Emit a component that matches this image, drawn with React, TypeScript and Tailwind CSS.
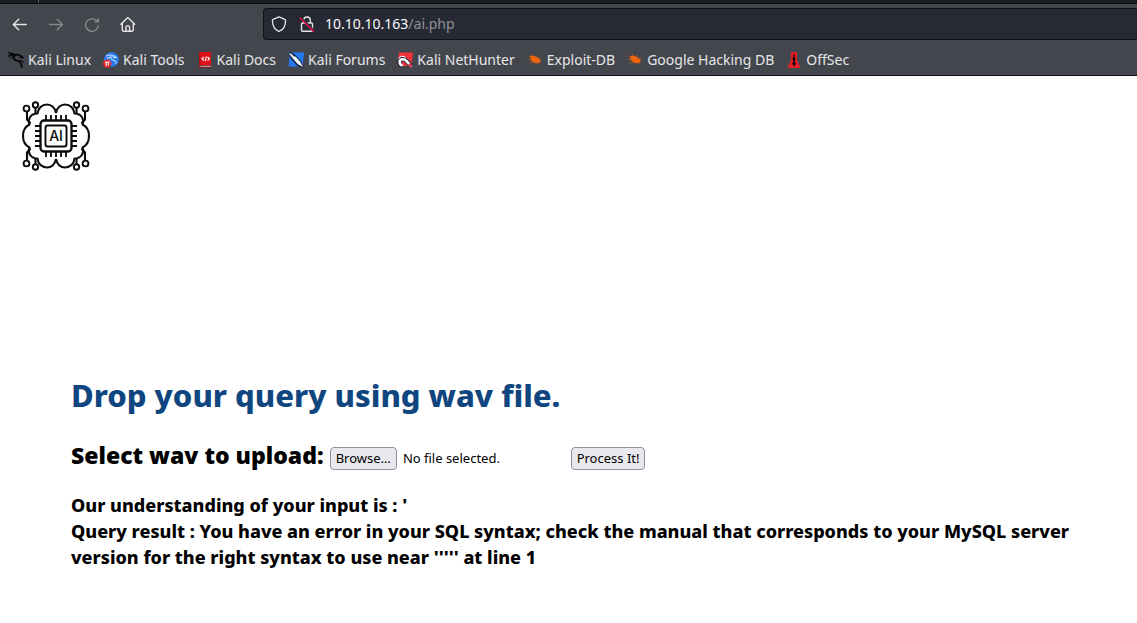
import React, { useRef, useState } from "react";

function BackIcon() {
  return (
    <svg className="size-4" viewBox="0 0 16 16" fill="none" stroke="currentColor" strokeWidth="1.4" strokeLinecap="round" strokeLinejoin="round">
      <path d="M14.3 8.5H1.4M6.7 3.2 1.3 8.5l5.4 5.3" />
    </svg>
  );
}

function ForwardIcon() {
  return (
    <svg className="size-4" viewBox="0 0 16 16" fill="none" stroke="currentColor" strokeWidth="1.4" strokeLinecap="round" strokeLinejoin="round">
      <path d="M1.5 8.5h12.9M9.2 3.2l5.4 5.3-5.4 5.3" />
    </svg>
  );
}

function ReloadIcon() {
  return (
    <svg className="size-4" viewBox="0 0 16 16" fill="none" stroke="currentColor" strokeWidth="1.4" strokeLinecap="round">
      <path d="M14.2 9.6A6.300 6.300 0 1 1 12 4.200l.8.700" />
      <path d="M15 1.600v5H9.900z" fill="currentColor" stroke="none" />
    </svg>
  );
}

function HomeIcon() {
  return (
    <svg className="size-4" viewBox="0 0 16 16" fill="none" stroke="currentColor" strokeWidth="1.4" strokeLinecap="round" strokeLinejoin="round">
      <path d="M.9 8.300 7.200 2a.9.9 0 0 1 1.200 0l6.300 6.300M2.300 7.400v6.400a1.400 1.400 0 0 0 1.400 1.400h8.200a1.400 1.400 0 0 0 1.400-1.400V7.400" />
      <path d="M6 15v-3.800c0-.8.5-1.300 1.200-1.300h1.200c.7 0 1.200.5 1.200 1.300V15" />
    </svg>
  );
}

function ShieldIcon() {
  return (
    <svg className="size-4" viewBox="0 0 16 16" fill="none" stroke="currentColor" strokeWidth="1.3" strokeLinejoin="round">
      <path d="M8 .9 13.8 3.3c.5.2.8.6.8 1.1-.1 5.3-1.6 8.8-6.1 10.8a1.2 1.2 0 0 1-1 0C3 13.2 1.5 9.7 1.4 4.4c0-.5.3-.9.8-1.1z" />
    </svg>
  );
}

function InsecureIcon() {
  return (
    <svg className="size-4" viewBox="0 0 16 16" fill="none" strokeLinecap="round">
      <path d="M4.7 7V4.3a3.3 3.3 0 0 1 6.6 0V7M3.500 7h9a1 1 0 0 1 1 1v6a1.200 1.200 0 0 1-1.200 1.200H3.700A1.200 1.200 0 0 1 2.500 14V8a1 1 0 0 1 1-1z" stroke="currentColor" strokeWidth="1.4" />
      <path d="M2.600 2 15 14.400" stroke="#272935" strokeWidth="1.600" />
      <path d="M1.300 2.200 14.400 15.300" stroke="#e8134a" strokeWidth="1.500" />
    </svg>
  );
}

function DragonIcon() {
  return (
    <svg className="size-4" viewBox="0 0 16 16" fill="none" stroke="#060607" strokeLinecap="round" strokeLinejoin="round">
      <path d="M.4.8C3.5 1 6 1.600 8.300 2.900M.5 4.200c2.600-1 4.800-1.400 7-.9" strokeWidth="1.2" />
      <path d="M1.200 3 6 2.200M2 6.300C3.600 5 5 4.300 6.600 4.200" strokeWidth=".9" />
      <path d="M7.300 2.800c2.600-.4 4.700.2 6.200 1.600l1.500 1.400-2.700-.5" strokeWidth="1.6" />
      <path d="M7.200 3.200C4.800 5 5.200 7.400 7.600 8.100c3.300.9 5.900 1.700 6.100 6.900" strokeWidth="1.8" />
      <path d="M10.400 8.700c2-.4 3.500.2 5 1.400" strokeWidth="1.200" />
    </svg>
  );
}

function ToolsIcon() {
  return (
    <svg className="size-4" viewBox="0 0 16 16" fill="none">
      <circle cx="8.500" cy="7.500" r="7.300" fill="#267df5" />
      <path d="M3.500 3.900c2.600-1.300 4.800-1.200 6.600 0 1.700.2 2.700.8 3.400 1.800l-2.800-.3M9.300 4.300c-2.300 1-2 3 .1 3.500 2.400.5 3.600 1.500 3.800 3.600M4.300 6.300c1.200-.8 2.100-1 3.200-1.100" stroke="#e8f1ff" strokeWidth="1" strokeLinecap="round" />
      <circle cx="4.200" cy="11.600" r="4.200" fill="#e82c2c" />
      <path d="M2 10.200h4.600M3.300 10.200v3.500M5.300 10.200v3.500" stroke="#fff" strokeWidth="1" />
    </svg>
  );
}

function DocsIcon() {
  return (
    <svg className="size-4" viewBox="0 0 16 16" fill="none">
      <path d="M2 0h12v13H2z" fill="#df1118" />
      <path d="M2 0h1.500v13H2z" fill="#b70d13" />
      <path d="M2 13h12v3H3c-.7 0-1-.6-1-1.200z" fill="#7d1f24" />
      <path d="M3.300 13.800H14v1H3.300z" fill="#c9b9bb" />
      <path d="M6.800 5 5 6.800l1.800 1.700M10.600 5l1.800 1.800-1.800 1.700M9.500 4.500 8.100 9.200" stroke="#fff" strokeWidth="1.100" />
    </svg>
  );
}

function ForumsIcon() {
  return (
    <svg className="size-4" viewBox="0 0 16 16">
      <path d="M2 .6h14L14.500 14.500H.5z" fill="#2479f0" />
      <path d="M0 .4 3 0l4.300 3 5.500 5.800 3.200 6.700-1.500.500-5.500-2.300L3 7z" fill="#15264a" />
      <path d="m.6.800 3 1.100 2.700 3 .600-1 4.700 5 3.600 6.100-5-2.500-4.800-5.200z" fill="#f5f7fa" />
    </svg>
  );
}

function NetHunterIcon() {
  return (
    <svg className="size-4" viewBox="0 0 16 16" fill="none">
      <path d="M2 .4h14L14.500 14H.5z" fill="#f2303b" />
      <path d="m15 15-5.600-6.300C7.500 6.300 3 6.600 2.400 9.300c-.5 2.400 1 4.200 3.300 4.200" stroke="#202334" strokeWidth="4.600" />
      <path d="m14.600 14.800-5.200-6C7.500 6.600 3.300 6.800 2.700 9.300c-.5 2.200.9 3.900 3 3.900" stroke="#fff" strokeWidth="2.600" />
      <path d="m1.200 6.500 3.200-2.300 4.300 1" stroke="#fff" strokeWidth="1" />
      <path d="m12 11.800 2.600 3" stroke="#e82a58" strokeWidth="2.600" />
    </svg>
  );
}

function BugIcon() {
  return (
    <svg className="size-4" viewBox="0 0 16 16" fill="none">
      <path d="M3 4.300c2-1.500 4.800-.7 6.800 1 1.600.3 2.800 1.400 3.200 2.800l1.300 1.200-1.500.6c-.8 1.400-2.400 1.700-4.100 1.200C6 10.800 3.200 8.800 3 4.300z" fill="#f0640e" />
      <path d="M4 5.200 1 3.800M4.500 8 .8 7.200M6 10l-3.400 1.300M8 11.200l-1.600 1.500M6 4 5.400 2.600M9 5l1-1.600M11.500 6.400l2.800-.6M12 11l1.600 1.300" stroke="#b5571f" strokeWidth=".7" strokeLinecap="round" />
    </svg>
  );
}

function OffSecIcon() {
  return (
    <svg className="size-4" viewBox="0 0 16 16">
      <path d="M5 0h6v8l3.500 8h-13L5 8z" fill="#e71f24" />
      <path d="M7.300 2.600h1.400v3l.9 1-.7 2v2l1.500 1.300-1.700.8-.2 1.600h-1l-.2-1.600-1.700-.8 1.500-1.300v-2l-.7-2 .9-1z" fill="#190709" />
    </svg>
  );
}

function AiLogo() {
  const pins = [-10, -5, 0, 5, 10];
  return (
    <svg className="size-[70px]" viewBox="-35 -35 70 70" fill="none" stroke="#0b0b0b" strokeWidth="2.1" strokeLinejoin="round" role="img" aria-label="AI">
      {[0, 1, 2, 3].map((k) => (
        <g key={k} transform={`scale(${k % 2 ? -1 : 1} ${k > 1 ? -1 : 1})`}>
          <path d="M0-23C1-28 4.500-31.500 9-31.500 14-31.500 18-28 18.500-22.500 25-22.500 28.500-17.500 26.500-11.500 30.500-9.500 33-5 33 0" />
          <path d="M20.500-28V-22.500M29-25v8.500L25.500-12.500" />
          <circle cx="20.500" cy="-31" r="2.700" fill="#fff" strokeWidth="1.900" />
          <circle cx="29.500" cy="-27.500" r="2.900" fill="#fff" strokeWidth="1.900" />
        </g>
      ))}
      {pins.map((p) => (
        <path key={p} d={`M${p}-21V-15M${p} 15V21M-21 ${p}H-15M15 ${p}H21`} strokeWidth="1.800" />
      ))}
      <rect x="-15.500" y="-15.500" width="31" height="31" rx="3.500" fill="#fff" strokeWidth="2.300" />
      <rect x="-10.500" y="-10.500" width="21" height="21" rx="2" strokeWidth="1.900" />
      <text x="0" y="5" textAnchor="middle" fontFamily="Inter, sans-serif" fontSize="14" fontWeight="500" fill="#0b0b0b" stroke="none">AI</text>
    </svg>
  );
}

const bookmarks = [
  { label: "Kali Linux", icon: <DragonIcon /> },
  { label: "Kali Tools", icon: <ToolsIcon /> },
  { label: "Kali Docs", icon: <DocsIcon /> },
  { label: "Kali Forums", icon: <ForumsIcon /> },
  { label: "Kali NetHunter", icon: <NetHunterIcon /> },
  { label: "Exploit-DB", icon: <BugIcon /> },
  { label: "Google Hacking DB", icon: <BugIcon /> },
  { label: "OffSec", icon: <OffSecIcon /> },
];

function BrowserChrome() {
  return (
    <header className="border-b border-[#0c0c12] bg-[#44464d] text-[#e6e6e8]">
      <div className="flex h-1 border-b border-[#0e0f12] bg-[#1b1c21]">
        <span className="ml-[38px] w-px bg-[#5b5c62]" />
      </div>
      <div className="flex items-center pt-1">
        <nav className="flex shrink-0 items-center gap-5 pl-3" aria-label="Navigation">
          <button type="button" aria-label="Back"><BackIcon /></button>
          <button type="button" aria-label="Forward" className="text-[#86888d]"><ForwardIcon /></button>
          <button type="button" aria-label="Reload" className="text-[#86888d]"><ReloadIcon /></button>
          <button type="button" aria-label="Home"><HomeIcon /></button>
        </nav>
        <div className="ml-[127px] flex h-8 min-w-0 flex-1 items-center rounded-l border border-r-0 border-[#101116] bg-[#272935] pl-[7px]">
          <ShieldIcon />
          <span className="ml-3"><InsecureIcon /></span>
          <a href="#" className="ml-2.5 text-sm text-[#8f9097]">
            <span className="text-[#fbfbfe]">10.10.10.163</span>/ai.php
          </a>
        </div>
      </div>
      <nav className="flex h-[35px] items-center gap-3 pt-1 pl-2" aria-label="Bookmarks">
        {bookmarks.map((b) => (
          <a key={b.label} href="#" className="flex items-center gap-1 text-sm whitespace-nowrap">
            {b.icon}
            {b.label}
          </a>
        ))}
      </nav>
    </header>
  );
}

const buttonClass =
  "h-[23px] rounded border border-[#8f8f9d] bg-[#e9e9ed] px-[5px] text-[13px] leading-5 text-black";

function UploadForm() {
  const picker = useRef<HTMLInputElement>(null);
  const [fileName, setFileName] = useState("No file selected.");
  return (
    <form className="mt-[18px] flex items-center" onSubmit={(e) => e.preventDefault()}>
      <label htmlFor="wav" className="text-[23px] leading-9 font-black">Select wav to upload:</label>
      <div className="mt-1.5 ml-1.5 flex w-[241px] items-center">
        <input
          ref={picker}
          id="wav"
          type="file"
          className="sr-only"
          onChange={(e) => setFileName(e.target.files?.[0]?.name ?? "No file selected.")}
        />
        <button type="button" className={buttonClass} onClick={() => picker.current?.click()}>Browse…</button>
        <span className="ml-1.5 text-[13px] leading-5">{fileName}</span>
      </div>
      <button type="submit" className={`mt-1.5 ${buttonClass}`}>Process It!</button>
    </form>
  );
}

export default function App() {
  return (
    <div className="min-h-screen bg-white font-['Noto_Sans',sans-serif] text-black">
      <BrowserChrome />
      <div className="px-[21px] pt-[25px]">
        <AiLogo />
      </div>
      <main className="pt-[200px] pr-16 pl-[71px]">
        <h1 className="text-[31px] leading-12 font-extrabold text-[#0f4680]">Drop your query using wav file.</h1>
        <UploadForm />
        <p className="mt-[19px] text-lg leading-[26px] font-extrabold">
          Our understanding of your input is : '<br />
          Query result : You have an error in your SQL syntax; check the manual that corresponds to your MySQL server version for the right syntax to use near ''''' at line 1
        </p>
      </main>
    </div>
  );
}
